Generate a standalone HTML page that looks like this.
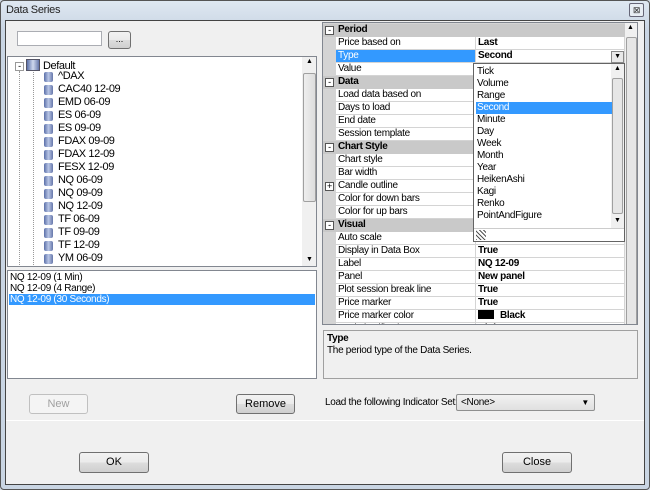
<!DOCTYPE html>
<html><head><style>
*{margin:0;padding:0;box-sizing:border-box}
body{width:650px;height:490px;background:#cfd8e3;font-family:"Liberation Sans",sans-serif;font-size:10px;letter-spacing:-0.3px;color:#000;position:relative;overflow:hidden}
.a{position:absolute}
.btn{position:absolute;border:1px solid #707070;border-radius:3px;background:linear-gradient(#f2f2f2,#ebebeb 50%,#dddddd 51%,#cfcfcf);text-align:center;font-size:11px;letter-spacing:0}
.row{position:absolute;left:0;width:302px;height:13px;line-height:12px}
.lab{position:absolute;left:13px;width:139px;height:12px;background:#fff;padding-left:2px;white-space:nowrap;overflow:hidden}
.val{position:absolute;left:153px;width:148px;height:12px;background:#fff;padding-left:2px;font-weight:bold;white-space:nowrap;overflow:hidden}
.hdr{position:absolute;left:0;width:302px;height:13px;background:#c9c9c9;font-weight:bold;line-height:12px;padding-left:15px}
.pm{position:absolute;left:2px;top:2px;width:9px;height:9px;border:1px solid #555;background:#fff;font-size:9px;line-height:7px;text-align:center;font-weight:normal}
.ti{position:absolute;left:51px;height:13px;line-height:13px;white-space:nowrap;font-size:11px;letter-spacing:-0.4px}
.ico{position:absolute;left:37px;width:9px;height:10px;background:linear-gradient(90deg,#5a6fa8,#b9c6e6 50%,#6677aa);border-radius:2px}
.dl{position:absolute;left:2px;height:12px;line-height:12px;width:136px;padding-left:1px}
</style></head><body>
<div class="a" style="left:0;top:0;width:650px;height:490px;border:1px solid #555;border-radius:4px;background:linear-gradient(#dfe8f2,#c9d5e3 30px)"></div>
<div class="a" style="left:6px;top:4px;font-size:11px;color:#222">Data Series</div>
<div class="a" style="left:629px;top:3px;width:15px;height:14px;border:1px solid #667;border-radius:2px;background:#e8eef4;font-size:9px;text-align:center;line-height:12px;color:#333">⊠</div>
<div class="a" style="left:5px;top:20px;width:640px;height:465px;border:1px solid #444;background:#f0f0f0"></div>

<div class="a" style="left:17px;top:31px;width:85px;height:15px;border:1px solid #abadb3;background:#fff"></div>
<div class="btn" style="left:108px;top:31px;width:23px;height:18px;line-height:14px;font-size:9px">...</div>
<div class="a" style="left:7px;top:56px;width:310px;height:211px;border:1px solid #828790;background:#fff;overflow:hidden">
  <div class="a" style="left:294px;top:0;width:15px;height:209px;background:#f0f0f0"></div>
  <div class="a" style="left:295px;top:16px;width:13px;height:129px;border:1px solid #a0a0a0;border-radius:2px;background:linear-gradient(90deg,#eee,#ddd)"></div>
  <div class="a" style="left:298px;top:1px;font-size:7px">▲</div>
  <div class="a" style="left:298px;top:199px;font-size:7px">▼</div>
  <div class="a" style="left:7px;top:5px;width:9px;height:9px;border:1px solid #999;font-size:9px;line-height:7px;text-align:center">-</div>
  <div class="a" style="left:11px;top:14px;height:196px;border-left:1px dotted #999"></div>
  <div class="a" style="left:25px;top:15px;height:195px;border-left:1px dotted #999"></div>
  <div class="a" style="left:18px;top:2px;width:14px;height:12px;background:linear-gradient(90deg,#5a6fa8,#cfd9ee 50%,#6677aa);border:1px solid #556"></div>
  <div class="ti" style="left:35px;top:3px">Default</div>
</div>

<div class="a" style="left:7px;top:70px;width:290px">
<div class="ico" style="top:2px"></div><div class="ti" style="top:0">^DAX</div>
<div class="ico" style="top:15px"></div><div class="ti" style="top:13px">CAC40 12-09</div>
<div class="ico" style="top:28px"></div><div class="ti" style="top:26px">EMD 06-09</div>
<div class="ico" style="top:41px"></div><div class="ti" style="top:39px">ES 06-09</div>
<div class="ico" style="top:54px"></div><div class="ti" style="top:52px">ES 09-09</div>
<div class="ico" style="top:67px"></div><div class="ti" style="top:65px">FDAX 09-09</div>
<div class="ico" style="top:80px"></div><div class="ti" style="top:78px">FDAX 12-09</div>
<div class="ico" style="top:93px"></div><div class="ti" style="top:91px">FESX 12-09</div>
<div class="ico" style="top:106px"></div><div class="ti" style="top:104px">NQ 06-09</div>
<div class="ico" style="top:119px"></div><div class="ti" style="top:117px">NQ 09-09</div>
<div class="ico" style="top:132px"></div><div class="ti" style="top:130px">NQ 12-09</div>
<div class="ico" style="top:145px"></div><div class="ti" style="top:143px">TF 06-09</div>
<div class="ico" style="top:158px"></div><div class="ti" style="top:156px">TF 09-09</div>
<div class="ico" style="top:171px"></div><div class="ti" style="top:169px">TF 12-09</div>
<div class="ico" style="top:184px"></div><div class="ti" style="top:182px">YM 06-09</div>
</div>

<div class="a" style="left:7px;top:270px;width:310px;height:109px;border:1px solid #828790;background:#fff">
  <div class="a" style="left:2px;top:1px;line-height:11px">NQ 12-09 (1 Min)</div>
  <div class="a" style="left:2px;top:12px;line-height:11px">NQ 12-09 (4 Range)</div>
  <div class="a" style="left:1px;top:23px;width:306px;height:11px;background:#3399ff;color:#fff;line-height:11px;padding-left:1px">NQ 12-09 (30 Seconds)</div>
</div>
<div class="btn" style="left:29px;top:394px;width:59px;height:20px;line-height:18px;color:#a0a0a0;border-color:#c0c0c0;background:#f4f4f4">New</div>
<div class="btn" style="left:236px;top:394px;width:59px;height:20px;line-height:18px">Remove</div>
<div class="a" style="left:6px;top:420px;width:638px;height:1px;background:#fff"></div>
<div class="btn" style="left:79px;top:452px;width:70px;height:21px;line-height:19px">OK</div>
<div class="btn" style="left:502px;top:452px;width:70px;height:21px;line-height:19px">Close</div>

<div class="a" style="left:322px;top:22px;width:316px;height:303px;border:1px solid #828790;background:#d4d4d4;overflow:hidden">
 <div class="a" style="left:302px;top:0;width:13px;height:302px;background:#f0f0f0"></div>
 <div class="a" style="left:303px;top:14px;width:11px;height:290px;border:1px solid #a0a0a0;border-radius:2px;background:#e6e6e6"></div>
 <div class="a" style="left:304px;top:1px;font-size:7px">▲</div>
 <div class="a" style="left:0;top:1px;width:302px">
  <div class="hdr" style="top:0"><div class="pm">-</div>Period</div>
  <div class="row" style="top:13px"><div class="lab">Price based on</div><div class="val">Last</div></div>
  <div class="row" style="top:26px"><div class="lab" style="background:#3399ff;color:#fff">Type</div><div class="val">Second</div></div>
  <div class="row" style="top:39px"><div class="lab">Value</div><div class="val"></div></div>
  <div class="hdr" style="top:52px"><div class="pm">-</div>Data</div>
  <div class="row" style="top:65px"><div class="lab">Load data based on</div><div class="val"></div></div>
  <div class="row" style="top:78px"><div class="lab">Days to load</div><div class="val"></div></div>
  <div class="row" style="top:91px"><div class="lab">End date</div><div class="val"></div></div>
  <div class="row" style="top:104px"><div class="lab">Session template</div><div class="val"></div></div>
  <div class="hdr" style="top:117px"><div class="pm">-</div>Chart Style</div>
  <div class="row" style="top:130px"><div class="lab">Chart style</div><div class="val"></div></div>
  <div class="row" style="top:143px"><div class="lab">Bar width</div><div class="val"></div></div>
  <div class="row" style="top:156px"><div class="pm">+</div><div class="lab">Candle outline</div><div class="val"></div></div>
  <div class="row" style="top:169px"><div class="lab">Color for down bars</div><div class="val"></div></div>
  <div class="row" style="top:182px"><div class="lab">Color for up bars</div><div class="val"></div></div>
  <div class="hdr" style="top:195px"><div class="pm">-</div>Visual</div>
  <div class="row" style="top:208px"><div class="lab">Auto scale</div><div class="val"></div></div>
  <div class="row" style="top:221px"><div class="lab">Display in Data Box</div><div class="val">True</div></div>
  <div class="row" style="top:234px"><div class="lab">Label</div><div class="val">NQ 12-09</div></div>
  <div class="row" style="top:247px"><div class="lab">Panel</div><div class="val">New panel</div></div>
  <div class="row" style="top:260px"><div class="lab">Plot session break line</div><div class="val">True</div></div>
  <div class="row" style="top:273px"><div class="lab">Price marker</div><div class="val">True</div></div>
  <div class="row" style="top:286px"><div class="lab">Price marker color</div><div class="val"><span style="display:inline-block;width:16px;height:9px;background:#000;vertical-align:-1px;margin-right:6px"></span>Black</div></div>
  <div class="row" style="top:299px"><div class="lab">Scale justification</div><div class="val">Right</div></div>
 </div>
 <div class="a" style="left:288px;top:28px;width:13px;height:12px;border:1px solid #888;background:#e8e8e8;font-size:7px;text-align:center;line-height:10px">▼</div>
</div>
<div class="a" style="left:473px;top:63px;width:152px;height:179px;border:1px solid #646464;background:#fff;overflow:hidden">
 <div class="a" style="left:137px;top:0;width:13px;height:164px;background:#f0f0f0"></div>
 <div class="a" style="left:138px;top:14px;width:11px;height:136px;border:1px solid #a0a0a0;border-radius:2px;background:#e6e6e6"></div>
 <div class="a" style="left:140px;top:1px;font-size:7px">▲</div>
 <div class="a" style="left:140px;top:153px;font-size:7px">▼</div>
 <div class="dl" style="top:2px">Tick</div>
 <div class="dl" style="top:14px">Volume</div>
 <div class="dl" style="top:26px">Range</div>
 <div class="dl" style="top:38px;background:#3399ff;color:#fff">Second</div>
 <div class="dl" style="top:50px">Minute</div>
 <div class="dl" style="top:62px">Day</div>
 <div class="dl" style="top:74px">Week</div>
 <div class="dl" style="top:86px">Month</div>
 <div class="dl" style="top:98px">Year</div>
 <div class="dl" style="top:110px">HeikenAshi</div>
 <div class="dl" style="top:122px">Kagi</div>
 <div class="dl" style="top:134px">Renko</div>
 <div class="dl" style="top:146px">PointAndFigure</div>
 <div class="a" style="left:0;top:164px;width:150px;height:14px;border-top:1px solid #ccc;background:#fff"></div>
 <div class="a" style="left:2px;top:166px;width:10px;height:10px;background:repeating-linear-gradient(45deg,#555 0 1px,#fff 1px 3px)"></div>
</div>
<div class="a" style="left:323px;top:330px;width:315px;height:49px;border:1px solid #a0a0a0;background:#f0f0f0">
 <div class="a" style="left:3px;top:2px;font-weight:bold">Type</div>
 <div class="a" style="left:3px;top:14px">The period type of the Data Series.</div>
</div>
<div class="a" style="left:325px;top:397px;white-space:nowrap">Load the following Indicator Set:</div>
<div class="a" style="left:456px;top:394px;width:139px;height:17px;border:1px solid #8e8f8f;border-radius:2px;background:linear-gradient(#f2f2f2,#e0e0e0);padding:2px 4px;line-height:11px">&lt;None&gt;<span style="position:absolute;right:5px;top:2px;font-size:8px">▼</span></div>
</body></html>
